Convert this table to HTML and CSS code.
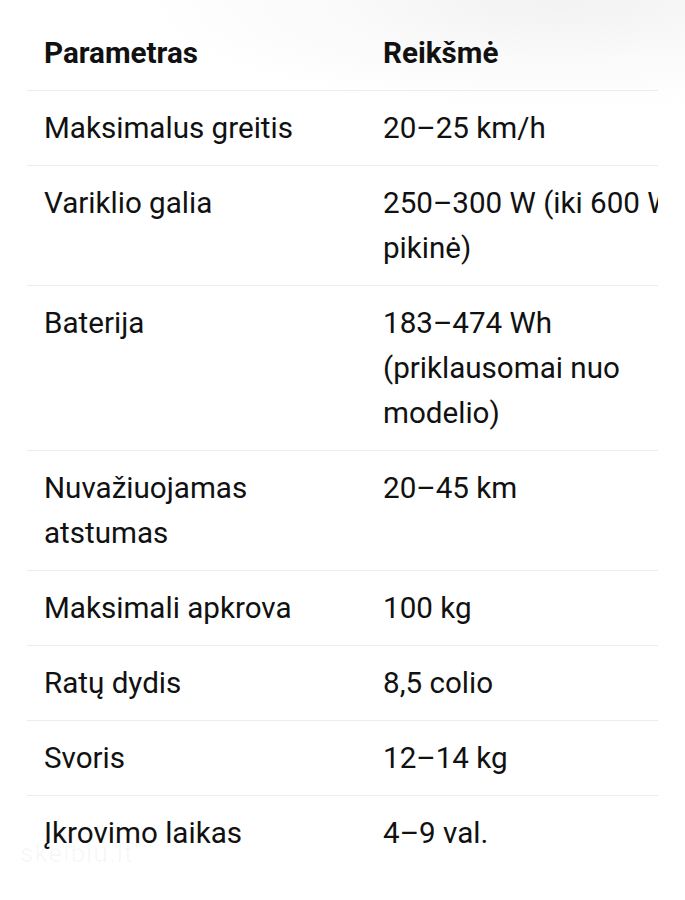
FILE: index.html
```html
<!DOCTYPE html>
<html lang="lt">
<head>
<meta charset="utf-8">
<title>Parametrai</title>
<link rel="stylesheet" href="styles.css">
</head>
<body>
<div class="page">
  <div class="table-wrap">
    <table class="spec">
      <colgroup><col class="c1"><col class="c2"></colgroup>
      <thead>
        <tr><th>Parametras</th><th>Reikšmė</th></tr>
      </thead>
      <tbody>
        <tr><td>Maksimalus greitis</td><td>20–25 km/h</td></tr>
        <tr><td>Variklio galia</td><td>250–300 W (iki 600 W pikinė)</td></tr>
        <tr><td>Baterija</td><td>183–474 Wh (priklausomai nuo modelio)</td></tr>
        <tr><td>Nuvažiuojamas atstumas</td><td>20–45 km</td></tr>
        <tr><td>Maksimali apkrova</td><td>100 kg</td></tr>
        <tr><td>Ratų dydis</td><td>8,5 colio</td></tr>
        <tr><td>Svoris</td><td>12–14 kg</td></tr>
        <tr class="last"><td>Įkrovimo laikas</td><td>4–9 val.</td></tr>
      </tbody>
    </table>
  </div>
  <div class="watermark">skelbiu.lt</div>
</div>
</body>
</html>
```
FILE: styles.css
```css
html, body {
  margin: 0;
  padding: 0;
  background: #ffffff;
}
body {
  width: 685px;
  height: 900px;
  overflow: hidden;
  font-family: Roboto, "Noto Sans", Arial, sans-serif;
  color: #111111;
  background: radial-gradient(ellipse 420px 110px at 560px 0px, #f2f2f2 0%, #fafafa 55%, #ffffff 100%);
}
.page {
  position: relative;
  padding-top: 15px;
  height: 885px;
}
.table-wrap {
  margin-left: 27px;
  width: 631px;
  overflow: hidden;
}
.spec {
  border-collapse: collapse;
  table-layout: fixed;
  width: 690px;
  font-size: 29.6px;
  line-height: 45px;
}
.c1 { width: 339px; }
.c2 { width: 351px; }
.spec th,
.spec td {
  text-align: left;
  vertical-align: top;
  padding: 15px 17px 14px 17px;
  border-bottom: 1px solid #ececec;
}
.spec th {
  font-weight: 700;
  padding-top: 16px;
}
.spec tr.last td {
  border-bottom: none;
}
.watermark {
  position: absolute;
  left: 20px;
  top: 838px;
  font-size: 26px;
  color: rgba(0, 0, 0, 0.035);
  letter-spacing: 1px;
}
```
